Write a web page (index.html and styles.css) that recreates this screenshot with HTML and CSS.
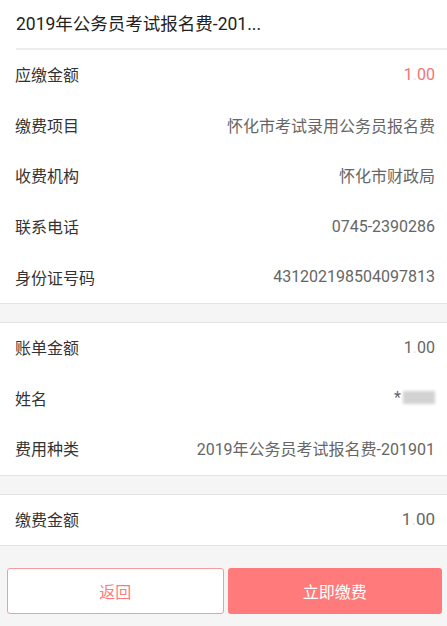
FILE: index.html
```html
<!DOCTYPE html>
<html lang="zh-CN">
<head>
  <meta charset="UTF-8" />
  <title>缴费详情</title>
  <link rel="stylesheet" href="styles.css">
</head>
<body>
  <div class="title-bar">
    <div class="title">2019年公务员考试报名费-201...</div>
  </div>

  <div class="group">
    <div class="row">
      <span class="label">应缴金额</span>
      <span class="value red">1<span class="dot">.</span>00</span>
    </div>
    <div class="row">
      <span class="label">缴费项目</span>
      <span class="value">怀化市考试录用公务员报名费</span>
    </div>
    <div class="row">
      <span class="label">收费机构</span>
      <span class="value">怀化市财政局</span>
    </div>
    <div class="row">
      <span class="label">联系电话</span>
      <span class="value">0745-2390286</span>
    </div>
    <div class="row">
      <span class="label">身份证号码</span>
      <span class="value">431202198504097813</span>
    </div>
  </div>

  <div class="group">
    <div class="row">
      <span class="label">账单金额</span>
      <span class="value">1<span class="dot">.</span>00</span>
    </div>
    <div class="row">
      <span class="label">姓名</span>
      <span class="value">*<span class="masked"></span></span>
    </div>
    <div class="row">
      <span class="label">费用种类</span>
      <span class="value">2019年公务员考试报名费-201901</span>
    </div>
  </div>

  <div class="group">
    <div class="row">
      <span class="label">缴费金额</span>
      <span class="value big">1<span class="dot">.</span>00</span>
    </div>
  </div>

  <div class="actions">
    <button class="btn btn-back">返回</button>
    <button class="btn btn-pay">立即缴费</button>
  </div>
</body>
</html>
```

FILE: styles.css
```css
:root {
  --bg-color: #f5f5f5;
  --line-color: #e3e3e3;
  --label-color: #333333;
  --value-color: #666666;
  --accent-color: #ff7b7b;
}

html, body {
  height: 100%;
}

body {
  margin: 0;
  background-color: var(--bg-color);
  font-family: "Roboto", "Noto Sans CJK SC", sans-serif;
  color: var(--label-color);
}

.title-bar {
  background-color: #fff;
  padding-left: 16px;
}

.title {
  height: 50px;
  line-height: 48px;
  font-size: 17.5px;
  color: #222;
  border-bottom: 2px solid #ececec;
  box-sizing: border-box;
}

.group {
  background-color: #fff;
  border-bottom: 1px solid var(--line-color);
  margin-bottom: 18px;
}

.group + .group {
  border-top: 1px solid var(--line-color);
}

.row {
  box-sizing: border-box;
  height: 50.6px;
  display: flex;
  align-items: center;
  justify-content: space-between;
  padding: 0 12px 2px 15px;
  font-size: 16px;
}

.label {
  color: var(--label-color);
}

.value {
  color: var(--value-color);
  display: flex;
  align-items: center;
}

.value.red {
  color: #f27474;
}

.value.big {
  font-size: 17px;
}

.dot {
  color: #e6e6e6;
}

.masked {
  display: inline-block;
  width: 32px;
  height: 13px;
  margin-left: 2px;
  background-color: #d2d2d2;
  filter: blur(1.5px);
}

.actions {
  display: flex;
  gap: 4px;
  padding: 4px 5px 0 7px;
}

.btn {
  flex: 1;
  height: 46px;
  border-radius: 3px;
  font-family: inherit;
  font-size: 16px;
  cursor: pointer;
}

.btn-back {
  background-color: #fff;
  color: var(--accent-color);
  border: 1px solid #f59a9e;
}

.btn-pay {
  background-color: var(--accent-color);
  color: #fff;
  border: none;
}
```
